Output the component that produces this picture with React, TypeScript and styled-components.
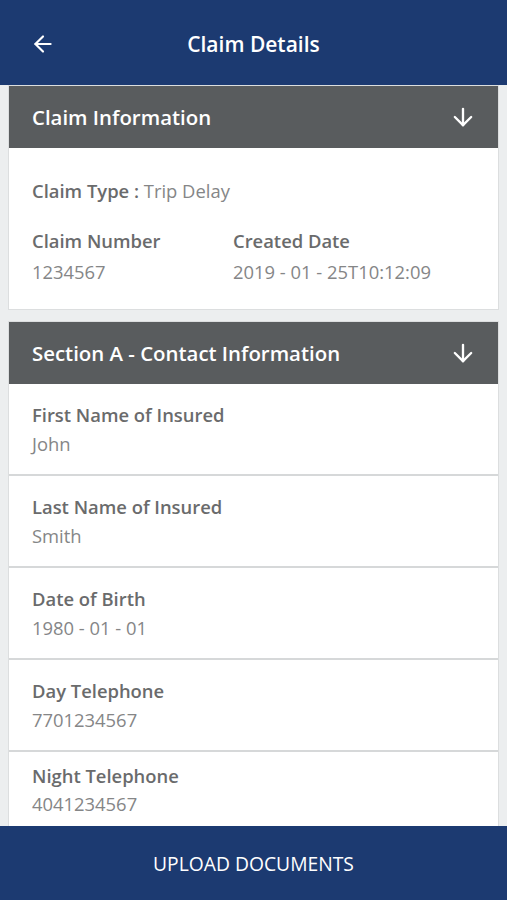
import React from 'react';
import styled, { createGlobalStyle } from 'styled-components';
import { ArrowLeft, ArrowDown } from 'lucide-react';

const claim = {
  type: 'Trip Delay',
  number: '1234567',
  created: '2019 - 01 - 25T10:12:09',
};

const contactFields = [
  { label: 'First Name of Insured', value: 'John' },
  { label: 'Last Name of Insured', value: 'Smith' },
  { label: 'Date of Birth', value: '1980 - 01 - 01' },
  { label: 'Day Telephone', value: '7701234567' },
  { label: 'Night Telephone', value: '4041234567' },
];

const App = () => (
  <>
    <GlobalStyle />
    <Screen>
      <TopBar>
        <BackButton type="button" aria-label="Back">
          <ArrowLeft size={26} strokeWidth={2} />
        </BackButton>
        <Title>Claim Details</Title>
      </TopBar>
      <Content>
        <Card>
          <SectionHeader>
            <SectionTitle>Claim Information</SectionTitle>
            <ArrowDown size={28} strokeWidth={2} />
          </SectionHeader>
          <SummaryBody>
            <TypeLine>
              <Label>Claim Type : </Label>
              <Value>{claim.type}</Value>
            </TypeLine>
            <SummaryGrid>
              <Field>
                <Label>Claim Number</Label>
                <Value>{claim.number}</Value>
              </Field>
              <Field>
                <Label>Created Date</Label>
                <Value>{claim.created}</Value>
              </Field>
            </SummaryGrid>
          </SummaryBody>
        </Card>
        <Card>
          <SectionHeader>
            <SectionTitle>Section A - Contact Information</SectionTitle>
            <ArrowDown size={28} strokeWidth={2} />
          </SectionHeader>
          {contactFields.map((f, i) => (
            <Row key={f.label} $tight={i === contactFields.length - 1}>
              <Label>{f.label}</Label>
              <Value>{f.value}</Value>
            </Row>
          ))}
        </Card>
      </Content>
      <Footer>UPLOAD DOCUMENTS</Footer>
    </Screen>
  </>
);

export default App;

const GlobalStyle = createGlobalStyle`
  body {
    margin: 0;
    font-family: "Open Sans", "Noto Sans", sans-serif;
    background: #eceeef;
  }
`;

const Screen = styled.div`
  display: flex;
  flex-direction: column;
  height: 900px;
  overflow: hidden;
  background: #eceeef;
`;

const TopBar = styled.header`
  position: relative;
  display: flex;
  align-items: center;
  justify-content: center;
  height: 85px;
  flex-shrink: 0;
  background: #1c3a71;
  color: #fff;
`;

const BackButton = styled.button`
  position: absolute;
  left: 30px;
  top: 31px;
  display: flex;
  padding: 0;
  border: none;
  background: none;
  color: #fff;
  cursor: pointer;
`;

const Title = styled.h1`
  margin: 2px 0 0;
  font-size: 21px;
  font-weight: 600;
`;

const Content = styled.main`
  flex: 1;
  overflow: hidden;
  padding: 1px 9px 0;
  display: flex;
  flex-direction: column;
  gap: 13px;
`;

const Card = styled.section`
  background: #fff;
  box-shadow: 0 0 0 1px #dcdedf;
  flex-shrink: 0;
`;

const SectionHeader = styled.div`
  display: flex;
  align-items: center;
  justify-content: space-between;
  height: 62px;
  padding: 0 21px 0 23px;
  background: #595c5e;
  color: #fff;
`;

const SectionTitle = styled.h2`
  margin: 0;
  font-size: 20.4px;
  font-weight: 600;
`;

const SummaryBody = styled.div`
  padding: 31px 23px 26px;
`;

const TypeLine = styled.div`
  margin-bottom: 26px;
`;

const SummaryGrid = styled.div`
  display: grid;
  grid-template-columns: 201px 1fr;
`;

const Field = styled.div`
  display: flex;
  flex-direction: column;
  gap: 8px;
`;

const Label = styled.span`
  font-size: 18.4px;
  font-weight: 600;
  color: #6a6b6c;
  line-height: 23px;
`;

const Value = styled.span`
  font-size: 18.4px;
  font-weight: 400;
  color: #858687;
  line-height: 23px;
`;

const Row = styled.div<{ $tight?: boolean }>`
  display: flex;
  flex-direction: column;
  gap: ${({ $tight }) => ($tight ? '5px' : '6px')};
  height: 92px;
  box-sizing: border-box;
  padding: ${({ $tight }) => ($tight ? '12px' : '19px')} 23px 0;
  border-bottom: 2px solid #d6d8d9;
`;

const Footer = styled.footer`
  display: flex;
  align-items: center;
  justify-content: center;
  height: 74px;
  flex-shrink: 0;
  background: #1c3a71;
  color: #fff;
  font-size: 19.3px;
`;
